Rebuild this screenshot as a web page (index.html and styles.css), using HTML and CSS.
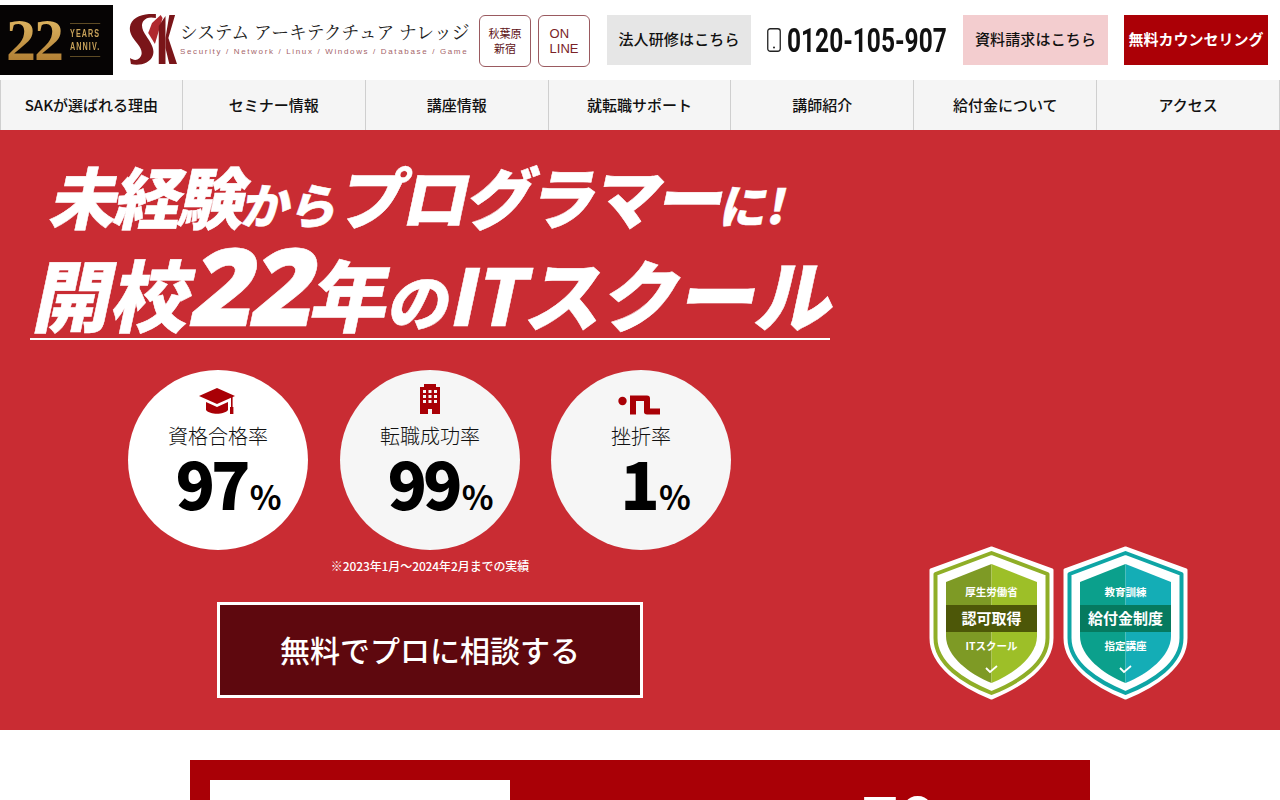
FILE: index.html
```html
<!DOCTYPE html>
<html lang="ja">
<head>
<meta charset="utf-8">
<title>SAK システムアーキテクチュアナレッジ</title>
<link rel="stylesheet" href="styles.css">
</head>
<body>
<header class="top">
  <div class="anniv">
    <span class="anniv-num">22</span>
    <span class="anniv-txt">YEARS<br>ANNIV.</span>
  </div>
  <svg class="sak" viewBox="0 0 50 52" width="48" height="52" preserveAspectRatio="none">
    <path fill="#7a1519" d="M28 0 C16 -1 2 3 1 13 C0 20 5 25 9 30 C13 35 15 40 11 44 C8 47 4 46 1 44 L2 50 C10 52 22 50 25 41 C27 34 22 28 18 22 C14 17 12 11 15 7 C18 3 23 3 28 4 Z"/>
    <path fill="#b0282e" d="M24 9 L33 1 L35 4 L27 30 L20 19 Z"/>
    <path fill="#7a1519" d="M31 12 L38 2 V50 H31 Z"/>
    <path fill="#7a1519" d="M38 24 L42 1 L48 1 L41 24 L50 50 L42 50 L38 34 Z"/>
  </svg>
  <div class="brand">
    <div class="brand-name">システム アーキテクチュア ナレッジ</div>
    <div class="brand-sub">Security / Network / Linux / Windows / Database / Game</div>
  </div>
  <div class="tag tag-jp">秋葉原<br>新宿</div>
  <div class="tag tag-en">ON<br>LINE</div>
  <a class="cta cta-grey">法人研修はこちら</a>
  <div class="tel">
    <svg class="phone" viewBox="0 0 14 24" width="14" height="24"><rect x="0.75" y="0.75" width="12.5" height="22.5" rx="2.5" fill="none" stroke="#222" stroke-width="1.3"/><circle cx="7" cy="19.5" r="1" fill="#222"/></svg>
    <span class="tel-num">0120-105-907</span>
  </div>
  <a class="cta cta-pink">資料請求はこちら</a>
  <a class="cta cta-red">無料カウンセリング</a>
</header>

<nav class="nav">
  <a class="nav-item">SAKが選ばれる理由</a>
  <a class="nav-item">セミナー情報</a>
  <a class="nav-item">講座情報</a>
  <a class="nav-item">就転職サポート</a>
  <a class="nav-item">講師紹介</a>
  <a class="nav-item">給付金について</a>
  <a class="nav-item">アクセス</a>
</nav>

<section class="hero">
  <div class="hero-main">
    <h1 class="head">
      <span class="line1"><b class="k1">未経験</b><i class="k2">から</i><b class="k3">プログラマー</b><i class="k4">に!</i></span>
      <span class="line2"><b>開校</b><em>22</em><b>年</b><i>の</i><b class="k5">ITスクール</b></span>
    </h1>
    <div class="stats">
      <div class="stat">
        <div class="ico ico-cap"><svg viewBox="0 0 36 27" width="36" height="27"><path fill="#a90006" d="M18 0 L36 8 L18 16 L0 8 Z"/><path fill="#a90006" d="M7 14 L18 19 L29 14 L29 22 C25 27 11 27 7 22 Z"/><rect x="32" y="9" width="1.6" height="11" fill="#a90006"/><rect x="31" y="19" width="3.4" height="7" fill="#a90006"/></svg></div>
        <div class="lbl">資格合格率</div>
        <div class="val"><strong>97</strong><small>%</small></div>
      </div>
      <div class="stat stat-b">
        <div class="ico"><svg viewBox="0 0 20 30" width="20" height="30"><path fill="#a90006" fill-rule="evenodd" d="M4 0 H16 V3 H20 V30 H12 V25 H8 V30 H0 V3 H4 Z M3 6 V9 H6 V6 Z M8.5 6 V9 H11.5 V6 Z M14 6 V9 H17 V6 Z M3 11 V14 H6 V11 Z M8.5 11 V14 H11.5 V11 Z M14 11 V14 H17 V11 Z M3 16 V19 H6 V16 Z M8.5 16 V19 H11.5 V16 Z M14 16 V19 H17 V16 Z"/></svg></div>
        <div class="lbl">転職成功率</div>
        <div class="val"><strong>99</strong><small>%</small></div>
      </div>
      <div class="stat stat-c">
        <div class="ico ico-crawl"><svg viewBox="0 0 42 20" width="42" height="20"><circle cx="4.5" cy="6" r="4.2" fill="#a90006"/><path fill="#a90006" d="M12 0.5 H29 C31 0.5 32 1.5 32 3.5 V13.5 H42 V19.5 H29 C27 19.5 26 18.5 26 17 V6 H18 V19.5 H12 Z"/></svg></div>
        <div class="lbl">挫折率</div>
        <div class="val val-c"><strong>1</strong><small>%</small></div>
      </div>
    </div>
    <p class="note">※2023年1月～2024年2月までの実績</p>
    <a class="consult">無料でプロに相談する</a>
  </div>
  <div class="badges">
    <svg class="badge" viewBox="0 0 125 154" width="125" height="154">
      <path fill="#fff" stroke="#fff" stroke-width="3" stroke-linejoin="round" d="M62.5 2 L123 24 V92 C123 120 92 140 62.5 152 C33 140 2 120 2 92 V24 Z"/>
      <path fill="none" stroke="#8fae27" stroke-width="4" stroke-linejoin="round" d="M62.5 7 L118.5 28 V92 C118.5 118 90 136 62.5 147 C35 136 6.5 118 6.5 92 V28 Z"/>
      <path fill="#7e9a25" d="M62.5 18 L17 36 V90 C17 110 40 128 62.5 137 Z"/>
      <path fill="#9dbf28" d="M62.5 18 L108 36 V90 C108 110 85 128 62.5 137 Z"/>
      <rect x="17" y="59" width="91" height="27" fill="#4d5708"/>
      <text x="62.5" y="50" class="b-sm">厚生労働省</text>
      <text x="62.5" y="78" class="b-lg">認可取得</text>
      <text x="62.5" y="104" class="b-sm">ITスクール</text>
      <path d="M57 122 L61 126 L68 120" fill="none" stroke="#fff" stroke-width="1.8"/>
    </svg>
    <svg class="badge" viewBox="0 0 125 154" width="125" height="154">
      <path fill="#fff" stroke="#fff" stroke-width="3" stroke-linejoin="round" d="M62.5 2 L123 24 V92 C123 120 92 140 62.5 152 C33 140 2 120 2 92 V24 Z"/>
      <path fill="none" stroke="#0ea5a5" stroke-width="4" stroke-linejoin="round" d="M62.5 7 L118.5 28 V92 C118.5 118 90 136 62.5 147 C35 136 6.5 118 6.5 92 V28 Z"/>
      <path fill="#0ba08c" d="M62.5 18 L17 36 V90 C17 110 40 128 62.5 137 Z"/>
      <path fill="#14adb6" d="M62.5 18 L108 36 V90 C108 110 85 128 62.5 137 Z"/>
      <rect x="17" y="59" width="91" height="27" fill="#067a5f"/>
      <text x="62.5" y="50" class="b-sm">教育訓練</text>
      <text x="62.5" y="78" class="b-lg">給付金制度</text>
      <text x="62.5" y="104" class="b-sm">指定講座</text>
      <path d="M57 122 L61 126 L68 120" fill="none" stroke="#fff" stroke-width="1.8"/>
    </svg>
  </div>
</section>

<section class="next">
  <div class="next-white"></div>
  <div class="next-title">70</div>
</section>
</body>
</html>
```
FILE: styles.css
```css
* { box-sizing: border-box; }
html, body { margin: 0; padding: 0; height: 800px; overflow: hidden; background: #fff; }
body { font-family: "Noto Sans CJK JP", "Noto Sans", sans-serif; color: #111; }
a { display: flex; align-items: center; justify-content: center; text-decoration: none; }

.top { height: 80px; display: flex; align-items: center; }
.anniv { width: 113px; height: 70px; background: #060404; display: flex; align-items: center; margin-right: 16px; padding-left: 6px; flex: none; }
.anniv-num { font-family: "Liberation Serif", serif; font-weight: 700; font-size: 60px; line-height: 1; letter-spacing: -2px; background: linear-gradient(180deg, #e6bf6a, #a8742a); -webkit-background-clip: text; background-clip: text; -webkit-text-fill-color: transparent; }
.anniv-txt { font-family: "Liberation Sans", sans-serif; font-size: 10px; line-height: 13px; letter-spacing: 1.5px; color: #c8a25a; border-top: 1px solid #5d4a24; border-bottom: 1px solid #5d4a24; padding: 3px 0; margin-left: 8px; font-weight: bold; white-space: nowrap; transform: scaleX(0.72); transform-origin: left center; }
.sak { flex: none; }
.brand { width: 289px; margin-left: 3px; margin-top: -2px; }
.brand-name { font-family: "Noto Serif CJK JP", "Noto Sans CJK JP", sans-serif; font-size: 17.8px; font-weight: 400; line-height: 22px; white-space: nowrap; color: #222; }
.brand-sub { font-family: "Liberation Sans", sans-serif; font-size: 8px; line-height: 12px; margin-top: 3px; letter-spacing: 1.65px; color: #a5656a; white-space: nowrap; }
.tag { width: 52px; height: 52px; margin-top: 2px; border: 1px solid #9a5a60; border-radius: 6px; display: flex; align-items: center; justify-content: center; flex: none; color: #5e1216; }
.tag-jp { font-size: 11px; line-height: 15px; margin-left: 10px; text-align: center; }
.tag-en { font-family: "Liberation Sans", sans-serif; font-size: 13px; line-height: 15px; margin-left: 7px; color: #7a2226; text-align: left; }
.cta { height: 50px; font-size: 15px; font-weight: 500; flex: none; white-space: nowrap; letter-spacing: 0.15px; padding-bottom: 3px; }
.cta-grey { width: 144px; background: #e6e6e6; margin-left: 17px; }
.tel { display: flex; align-items: center; width: 212px; padding-left: 16px; flex: none; }
.phone { flex: none; }
.tel-num { font-family: "Roboto", "Liberation Sans", sans-serif; font-weight: 700; font-size: 34px; letter-spacing: 0; margin-left: 6px; transform: scaleX(0.72); transform-origin: left center; white-space: nowrap; color: #111; }
.cta-pink { width: 145px; background: #f3cdcf; }
.cta-red { width: 144px; background: #ab0006; color: #fff; margin-left: 16px; font-size: 15px; font-weight: 700; letter-spacing: 0; }

.nav { height: 50px; display: grid; grid-template-columns: repeat(7, 1fr); background: #f5f5f5; }
.nav-item { border-right: 1px solid #cfcfcf; font-size: 15px; font-weight: 500; color: #111; padding-bottom: 2px; }
.nav-item:first-child { border-left: 1px solid #cfcfcf; }

.hero { height: 600px; background: #c92c33; display: flex; color: #fff; }
.hero-main { width: 860px; padding-top: 25px; padding-left: 30px; display: flex; flex-direction: column; flex: none; }
.head { margin: 0; width: 800px; font-weight: 900; display: flex; flex-direction: column; border-bottom: 2px solid #fff; }
.head b, .head em, .head i { font-style: normal; font-weight: 900; }
.line1, .line2 { display: block; white-space: nowrap; transform: skewX(-12deg); -webkit-text-stroke: 0.5px #fff; }
.line1 { font-size: 67px; line-height: 80px; height: 79px; padding-left: 24px; }
.k1 { letter-spacing: -3px; }
.k2 { font-size: 48px; }
.k3 { letter-spacing: -3.3px; }
.k4 { font-size: 47px; }
.line2 { font-size: 78px; line-height: 102px; height: 104px; padding-left: 9px; }
.line2 em { font-family: "Noto Sans", sans-serif; font-size: 108px; letter-spacing: -3px; }
.line2 i { font-size: 62px; }
.k5 { letter-spacing: -1.2px; }
.stats { display: flex; margin-top: 30px; margin-left: 98px; }
.stat { width: 180px; height: 180px; border-radius: 50%; background: #fff; display: flex; flex-direction: column; align-items: center; color: #000; flex: none; }
.stat-b { background: #f6f6f6; margin-left: 32px; }
.stat-c { background: #f6f6f6; margin-left: 31px; }
.ico { display: flex; align-items: flex-end; margin-top: 14px; height: 30px; flex: none; }
.ico svg { display: block; }
.ico-cap svg { margin: 0 1px -1px -1px; }
.ico-crawl svg { margin: 0 2px -1px -2px; }
.lbl { font-size: 20px; font-weight: 300; line-height: 26px; margin-top: 9px; color: #111; letter-spacing: 0; }
.val { display: flex; align-items: baseline; line-height: 60px; margin-top: 3px; margin-left: 21px; }
.val-c { margin-left: 29px; }
.val strong { font-size: 65px; font-weight: 900; letter-spacing: -4px; }
.val small { font-size: 33px; font-weight: 700; margin-left: 3px; }
.note { margin: 6px 0 0; width: 800px; text-align: center; font-size: 12px; line-height: 20px; font-weight: 500; letter-spacing: -0.1px; }
.consult { width: 426px; height: 96px; margin: 26px 0 0 187px; border: 3px solid #fff; background: #5e080e; color: #fff; font-size: 30px; font-weight: 500; padding-bottom: 2px; }

.badges { display: flex; gap: 9px; align-self: flex-end; margin: 0 0 30px 69px; }
.badge { display: block; flex: none; }
.b-sm { fill: #fff; font-size: 10.5px; font-weight: 700; text-anchor: middle; }
.b-lg { fill: #fff; font-size: 15px; font-weight: 700; text-anchor: middle; }

.next { width: 900px; height: 200px; margin: 30px auto 0; background: #a90006; padding: 20px; display: flex; }
.next-white { width: 300px; height: 180px; background: #fff; flex: none; }
.next-title { color: #fff; font-weight: 900; font-size: 62px; line-height: 1; margin: 5px 0 0 351px; }
```
